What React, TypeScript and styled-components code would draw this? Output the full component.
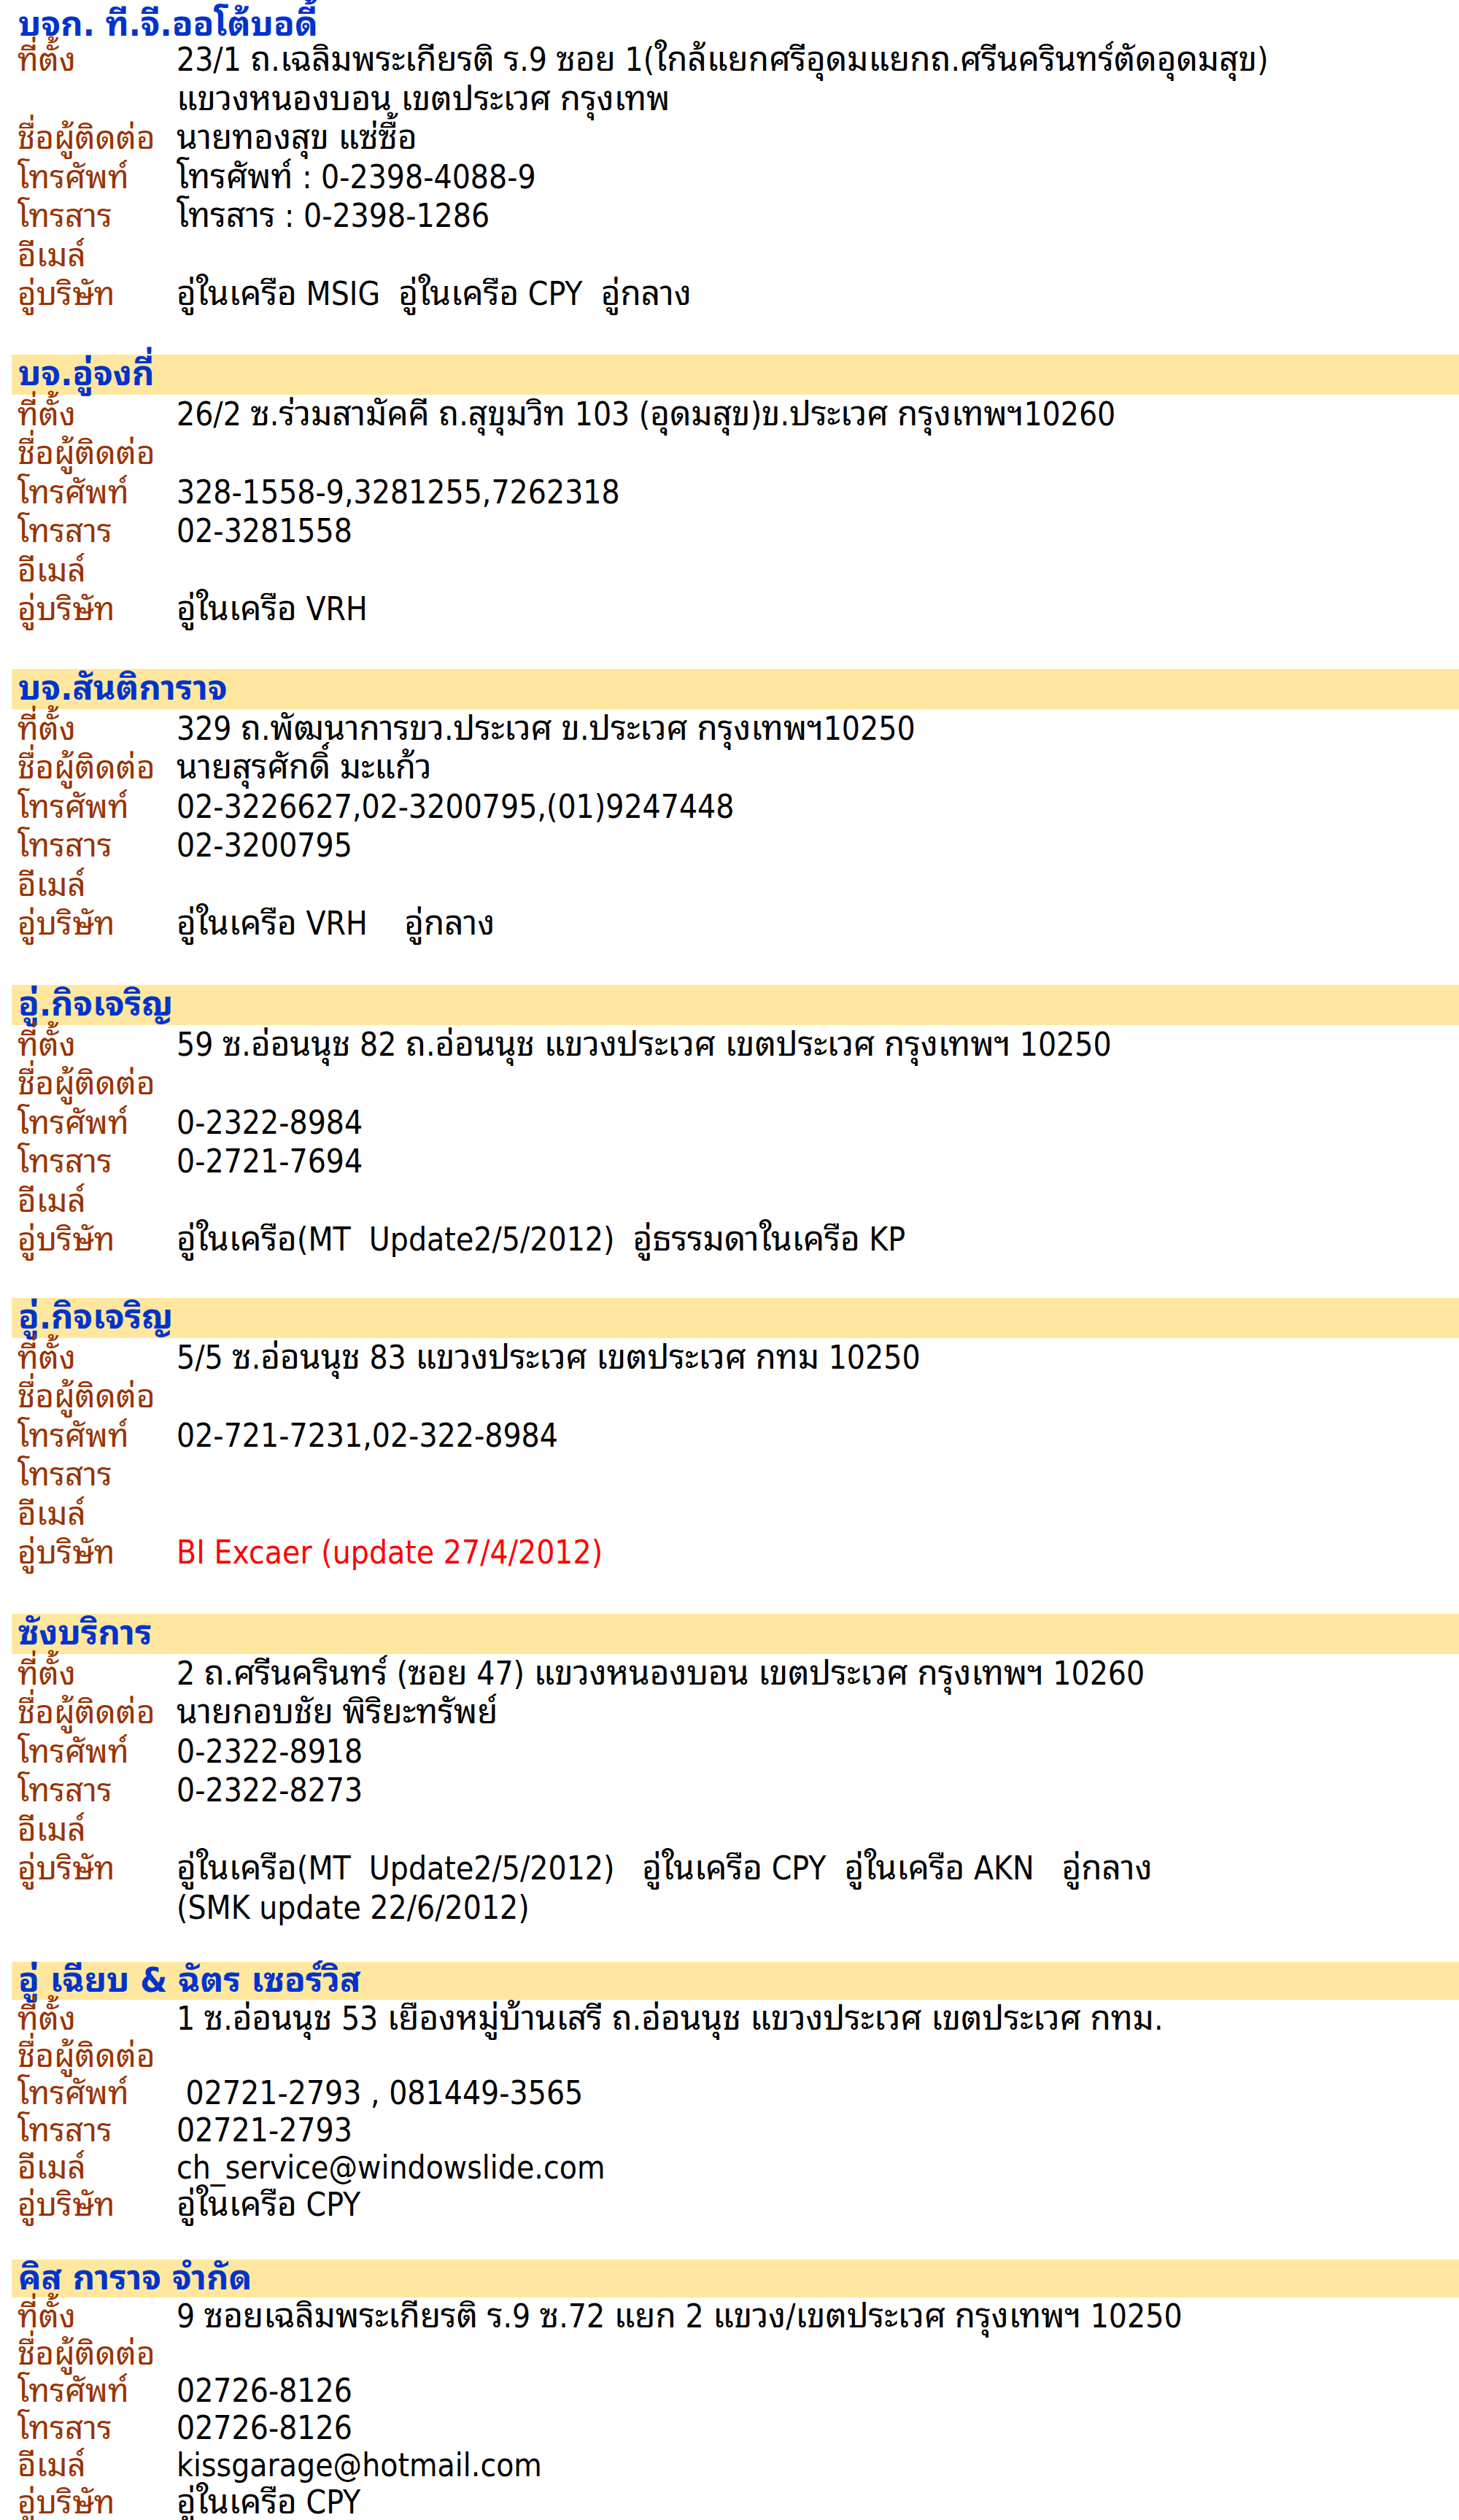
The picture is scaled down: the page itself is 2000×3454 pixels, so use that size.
import React from "react";
import styled, { createGlobalStyle } from "styled-components";

const GlobalStyle = createGlobalStyle`
    html, body {
        margin: 0;
        padding: 0;
        background: #ffffff;
    }
`;

const Page = styled.div`
    padding-left: 16px;
    font-family: "DejaVu Sans Condensed", Tahoma, "Noto Sans Thai Looped",
        "Noto Sans Thai", Loma, Garuda, Waree, "DejaVu Sans", sans-serif;
    font-size: 44px;
    color: #000000;
`;

const Section = styled.section<{ $gap: number }>`
    margin-bottom: ${(p) => p.$gap}px;
`;

const Band = styled.div<{ $plain?: boolean; $tight?: boolean }>`
    display: flex;
    align-items: center;
    box-sizing: border-box;
    height: ${(p) => (p.$tight ? 52 : 55)}px;
    padding: ${(p) => (p.$plain ? "10px 0 0 9px" : "0 0 4px 9px")};
    line-height: 1;
    background: ${(p) => (p.$plain ? "transparent" : "#ffe79f")};
    color: #0033cc;
    font-size: 47px;
    font-weight: bold;
    white-space: nowrap;
`;

const Row = styled.div`
    display: grid;
    grid-template-columns: 218px 1fr;
    padding-left: 8px;
`;

const Label = styled.div<{ $lh: number }>`
    height: ${(p) => p.$lh}px;
    line-height: ${(p) => p.$lh}px;
    color: #993300;
    white-space: nowrap;
`;

const Value = styled.div<{ $red?: boolean }>`
    color: ${(p) => (p.$red ? "#ff0000" : "#000000")};
    white-space: pre;
`;

const Line = styled.div<{ $lh: number }>`
    height: ${(p) => p.$lh}px;
    line-height: ${(p) => p.$lh}px;
`;

// Thai runs are set a touch larger so their widths follow the original Tahoma
const Thai = styled.span`
    font-size: 1.045em;
    line-height: 0;
`;

const splitThai = (text: string) =>
    text
        .split(/([\u0E00-\u0E7F]+)/)
        .filter((part) => part !== "")
        .map((part, i) =>
            /[\u0E00-\u0E7F]/.test(part) ? <Thai key={i}>{part}</Thai> : part,
        );

type Field = { label: string; lines: string[]; red?: boolean };

type Garage = {
    title: string;
    plain?: boolean;
    tight?: boolean;
    gap: number;
    fields: Field[];
};

const make = (
    address: string[],
    contact: string,
    phone: string,
    fax: string,
    email: string,
    company: string[],
    red?: boolean,
): Field[] => [
    { label: "ที่ตั้ง", lines: address },
    { label: "ชื่อผู้ติดต่อ", lines: [contact] },
    { label: "โทรศัพท์", lines: [phone] },
    { label: "โทรสาร", lines: [fax] },
    { label: "อีเมล์", lines: [email] },
    { label: "อู่บริษัท", lines: company, red },
];

const garages: Garage[] = [
    {
        title: "บจก. ที.จี.ออโต้บอดี้",
        plain: true,
        gap: 56,
        fields: make(
            [
                "23/1 ถ.เฉลิมพระเกียรติ ร.9 ซอย 1(ใกล้แยกศรีอุดมแยกถ.ศรีนครินทร์ตัดอุดมสุข)",
                "แขวงหนองบอน เขตประเวศ กรุงเทพ",
            ],
            "นายทองสุข แซ่ซื้อ",
            "โทรศัพท์ : 0-2398-4088-9",
            "โทรสาร : 0-2398-1286",
            "",
            ["อู่ในเครือ MSIG  อู่ในเครือ CPY  อู่กลาง"],
        ),
    },
    {
        title: "บจ.อู่จงกี่",
        gap: 55,
        fields: make(
            ["26/2 ซ.ร่วมสามัคคี ถ.สุขุมวิท 103 (อุดมสุข)ข.ประเวศ กรุงเทพฯ10260"],
            "",
            "328-1558-9,3281255,7262318",
            "02-3281558",
            "",
            ["อู่ในเครือ VRH"],
        ),
    },
    {
        title: "บจ.สันติการาจ",
        gap: 57,
        fields: make(
            ["329 ถ.พัฒนาการขว.ประเวศ ข.ประเวศ กรุงเทพฯ10250"],
            "นายสุรศักดิ์ มะแก้ว",
            "02-3226627,02-3200795,(01)9247448",
            "02-3200795",
            "",
            ["อู่ในเครือ VRH    อู่กลาง"],
        ),
    },
    {
        title: "อู่.กิจเจริญ",
        gap: 53,
        fields: make(
            ["59 ซ.อ่อนนุช 82 ถ.อ่อนนุช แขวงประเวศ เขตประเวศ กรุงเทพฯ 10250"],
            "",
            "0-2322-8984",
            "0-2721-7694",
            "",
            ["อู่ในเครือ(MT  Update2/5/2012)  อู่ธรรมดาในเครือ KP"],
        ),
    },
    {
        title: "อู่.กิจเจริญ",
        gap: 57,
        fields: make(
            ["5/5 ซ.อ่อนนุช 83 แขวงประเวศ เขตประเวศ กทม 10250"],
            "",
            "02-721-7231,02-322-8984",
            "",
            "",
            ["BI Excaer (update 27/4/2012)"],
            true,
        ),
    },
    {
        title: "ซังบริการ",
        gap: 48,
        fields: make(
            ["2 ถ.ศรีนครินทร์ (ซอย 47) แขวงหนองบอน เขตประเวศ กรุงเทพฯ 10260"],
            "นายกอบชัย พิริยะทรัพย์",
            "0-2322-8918",
            "0-2322-8273",
            "",
            [
                "อู่ในเครือ(MT  Update2/5/2012)   อู่ในเครือ CPY  อู่ในเครือ AKN   อู่กลาง",
                "(SMK update 22/6/2012)",
            ],
        ),
    },
    {
        title: "อู่ เฉียบ & ฉัตร เซอร์วิส",
        tight: true,
        gap: 50,
        fields: make(
            ["1 ซ.อ่อนนุช 53 เยืองหมู่บ้านเสรี ถ.อ่อนนุช แขวงประเวศ เขตประเวศ กทม."],
            "",
            " 02721-2793 , 081449-3565",
            "02721-2793",
            "ch_service@windowslide.com",
            ["อู่ในเครือ CPY"],
        ),
    },
    {
        title: "คิส การาจ จำกัด",
        tight: true,
        gap: 0,
        fields: make(
            ["9 ซอยเฉลิมพระเกียรติ ร.9 ซ.72 แยก 2 แขวง/เขตประเวศ กรุงเทพฯ 10250"],
            "",
            "02726-8126",
            "02726-8126",
            "kissgarage@hotmail.com",
            ["อู่ในเครือ CPY"],
        ),
    },
];

const App: React.FC = () => {
    return (
        <>
            <GlobalStyle />
            <Page>
                {garages.map((g, i) => {
                    const lh = g.tight ? 51 : 53.5;
                    return (
                        <Section key={i} $gap={g.gap}>
                            <Band $plain={g.plain} $tight={g.tight}>
                                {g.title}
                            </Band>
                            {g.fields.map((f) => (
                                <Row key={f.label}>
                                    <Label $lh={lh}>{f.label}</Label>
                                    <Value $red={f.red}>
                                        {f.lines.map((line, j) => (
                                            <Line key={j} $lh={lh}>
                                                {splitThai(line)}
                                            </Line>
                                        ))}
                                    </Value>
                                </Row>
                            ))}
                        </Section>
                    );
                })}
            </Page>
        </>
    );
};

export default App;
